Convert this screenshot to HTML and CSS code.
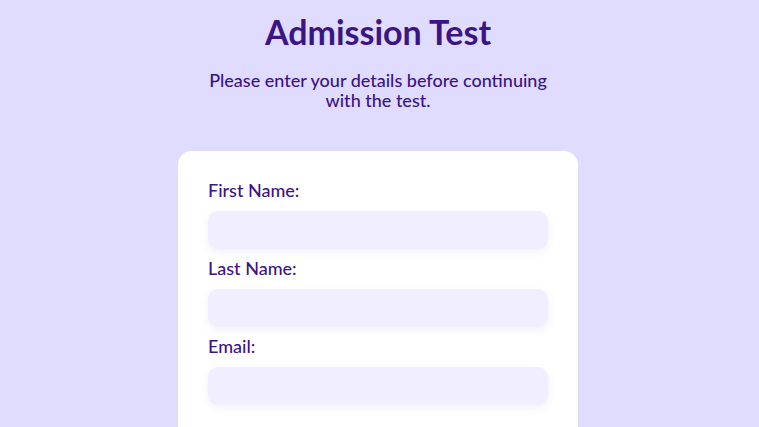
FILE: index.html
```html
<!DOCTYPE html>
<html lang="en">
<head>
<meta charset="utf-8">
<title>Admission Test</title>
<link rel="stylesheet" href="styles.css">
</head>
<body>
<main class="page">
  <h1 class="title">Admission Test</h1>
  <p class="subtitle">Please enter your details before continuing with the test.</p>
  <form class="card">
    <label class="label" for="first">First Name:</label>
    <input class="field" id="first" type="text">
    <label class="label" for="last">Last Name:</label>
    <input class="field" id="last" type="text">
    <label class="label" for="email">Email:</label>
    <input class="field" id="email" type="email">
  </form>
</main>
</body>
</html>
```

FILE: styles.css
```css
html, body {
  margin: 0;
  padding: 0;
  background: #e0dcff;
  font-family: "Lato", "Open Sans", sans-serif;
  color: #3a1386;
}
.page {
  display: flex;
  flex-direction: column;
  align-items: center;
  padding-right: 3px;
}
.title {
  margin: 12px 0 0;
  font-size: 34px;
  line-height: 40px;
  font-weight: 700;
  color: #3b1585;
}
.subtitle {
  margin: 18px 0 0;
  width: 370px;
  text-align: center;
  font-size: 18px;
  line-height: 20px;
  font-weight: 500;
  color: #3a1386;
}
.card {
  margin-top: 41px;
  width: 400px;
  box-sizing: border-box;
  background: #ffffff;
  border-radius: 14px;
  padding: 29px 30px 40px;
  display: flex;
  flex-direction: column;
}
.label {
  font-size: 18px;
  line-height: 20px;
  font-weight: 500;
  margin-bottom: 11px;
}
.field {
  height: 38px;
  border: none;
  border-radius: 10px;
  background: #f1efff;
  box-shadow: 0 3px 8px rgba(80, 60, 160, 0.08);
  margin-bottom: 9px;
  padding: 0 12px;
  outline: none;
}
```
